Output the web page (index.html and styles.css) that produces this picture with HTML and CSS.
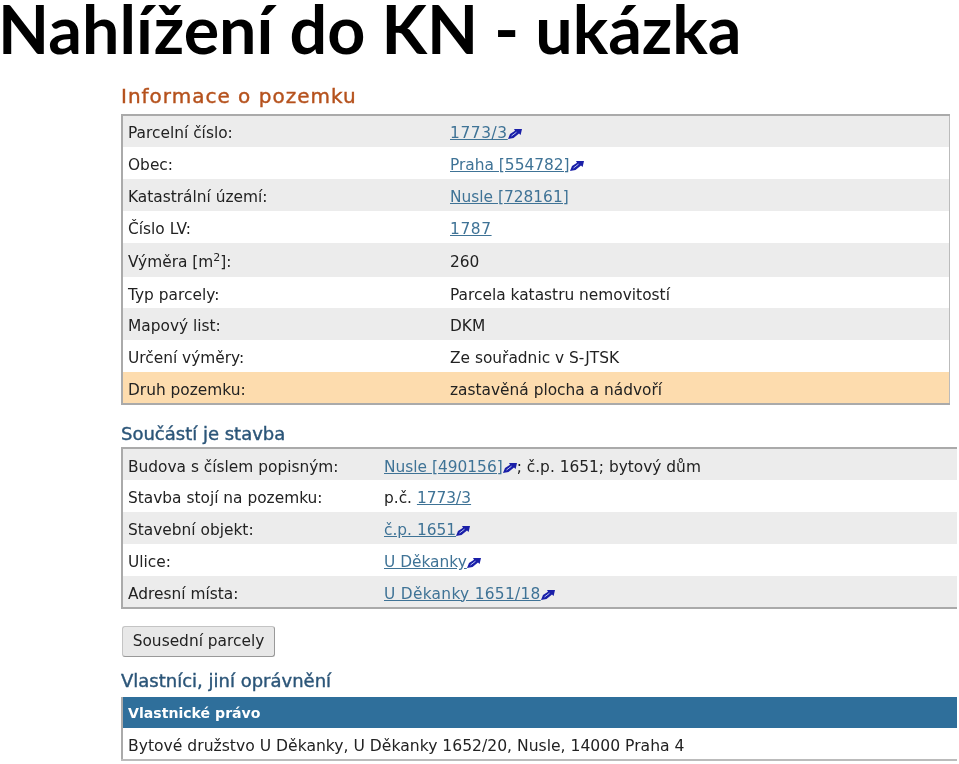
FILE: index.html
```html
<!DOCTYPE html>
<html lang="cs">
<head>
  <meta charset="UTF-8">
  <title>Nahlížení do KN - ukázka</title>
  <link rel="stylesheet" href="styles.css">
</head>
<body>
  <svg class="defs" width="0" height="0">
    <symbol id="pen" viewBox="0 0 14 10">
      <path d="M0 10 L2 5 L7 1.8 L6 0 L14 0 L12.6 6 L11 4.6 L5.5 9 Z" fill="#1a1fa8"/>
      <path d="M3.5 7 L8.5 3.2" stroke="#b9c4f2" stroke-width="1" fill="none"/>
    </symbol>
  </svg>

  <h1 class="slide-title">Nahlížení do KN - ukázka</h1>

  <div class="content">
    <h2 class="sec-title orange">Informace o pozemku</h2>
    <table class="info parcel">
      <tr><td class="lbl">Parcelní číslo:</td><td><a href="#" class="num">1773/3<svg class="pen"><use href="#pen"/></svg></a></td></tr>
      <tr><td class="lbl">Obec:</td><td><a href="#">Praha [554782]<svg class="pen"><use href="#pen"/></svg></a></td></tr>
      <tr><td class="lbl">Katastrální území:</td><td><a href="#">Nusle [728161]</a></td></tr>
      <tr><td class="lbl">Číslo LV:</td><td><a href="#" class="num">1787</a></td></tr>
      <tr class="tall"><td class="lbl">Výměra [m<sup>2</sup>]:</td><td>260</td></tr>
      <tr><td class="lbl">Typ parcely:</td><td>Parcela katastru nemovitostí</td></tr>
      <tr><td class="lbl">Mapový list:</td><td>DKM</td></tr>
      <tr><td class="lbl">Určení výměry:</td><td>Ze souřadnic v S-JTSK</td></tr>
      <tr class="hl"><td class="lbl">Druh pozemku:</td><td>zastavěná plocha a nádvoří</td></tr>
    </table>

    <h2 class="sec-title blue">Součástí je stavba</h2>
    <table class="info building">
      <tr><td class="lbl">Budova s číslem popisným:</td><td><a href="#">Nusle [490156]<svg class="pen"><use href="#pen"/></svg></a>; č.p. 1651; bytový dům</td></tr>
      <tr><td class="lbl">Stavba stojí na pozemku:</td><td>p.č. <a href="#">1773/3</a></td></tr>
      <tr><td class="lbl">Stavební objekt:</td><td><a href="#">č.p. 1651<svg class="pen"><use href="#pen"/></svg></a></td></tr>
      <tr><td class="lbl">Ulice:</td><td><a href="#">U Děkanky<svg class="pen"><use href="#pen"/></svg></a></td></tr>
      <tr><td class="lbl">Adresní místa:</td><td><a href="#" class="num-s">U Děkanky 1651/18<svg class="pen"><use href="#pen"/></svg></a></td></tr>
    </table>

    <button class="btn">Sousední parcely</button>

    <h2 class="sec-title blue owners">Vlastníci, jiní oprávnění</h2>
    <table class="info owner">
      <tr class="head"><th>Vlastnické právo</th></tr>
      <tr class="plain"><td>Bytové družstvo U Děkanky, U Děkanky 1652/20, Nusle, 14000 Praha 4</td></tr>
    </table>
  </div>
</body>
</html>
```

FILE: styles.css
```css
html, body {
  margin: 0;
  padding: 0;
  background: #fff;
  overflow: hidden;
}
body {
  height: 764px;
  font-family: "DejaVu Sans", sans-serif;
  color: #222;
}
.defs {
  display: block;
  height: 0;
}
.slide-title {
  margin: 0 0 0 -2px;
  height: 67px;
  font-family: Lato, sans-serif;
  font-size: 66.4px;
  line-height: 56px;
  font-weight: 700;
  color: #000;
  white-space: nowrap;
}
.content {
  padding-left: 121px;
  filter: blur(0.35px);
}
.sec-title {
  margin: 0;
  line-height: 22px;
  font-weight: 400;
  -webkit-text-stroke: 0.4px currentColor;
}
.orange {
  padding-top: 18px;
  padding-bottom: 7px;
  font-size: 20px;
  letter-spacing: 1px;
  color: #b5511c;
}
.blue {
  padding-top: 18px;
  padding-bottom: 2px;
  font-size: 18px;
  color: #2b5578;
}
.owners {
  padding-top: 13px;
  padding-bottom: 5px;
}
.info {
  border-collapse: collapse;
  table-layout: fixed;
  font-size: 15.4px;
  border-top: 2px solid #aaa;
  border-left: 2px solid #aaa;
}
.parcel {
  width: 829px;
  border-right: 1px solid #bbb;
  border-bottom: 2px solid #aaa;
}
.building {
  width: 836px;
  border-bottom: 2px solid #aaa;
}
.owner {
  width: 836px;
  border-top: 0;
  border-bottom: 2px solid #bbb;
}
.info td, .info th {
  box-sizing: border-box;
  height: 31.9px;
  padding: 4px 0 0 5px;
  white-space: nowrap;
  text-align: left;
}
.building td {
  padding-top: 5px;
}
.parcel .lbl {
  width: 323px;
}
.building .lbl {
  width: 257px;
}
.info tr:nth-child(odd) {
  background: #ececec;
}
.info tr:nth-child(even) {
  background: #fff;
}
.info .tall td {
  height: 34px;
}
.info tr.hl {
  background: #fddcae;
}
.info sup {
  font-size: 11px;
  line-height: 0;
}
.info tr.head {
  background: #2f6f9b;
  color: #fff;
}
.info .head th {
  font-weight: 700;
  font-size: 14.1px;
  padding-top: 1px;
}
.info .plain td {
  font-size: 15.6px;
  padding-top: 5px;
}
.info a {
  color: #3f7396;
}
.info a.num {
  letter-spacing: 0.6px;
}
.info a.num-s {
  letter-spacing: 0.3px;
}
.pen {
  width: 14px;
  height: 10px;
  vertical-align: -1px;
}
.btn {
  display: block;
  box-sizing: border-box;
  width: 153px;
  height: 31px;
  margin: 17px 0 0 1px;
  padding: 0;
  font-family: inherit;
  font-size: 15.4px;
  color: #222;
  background: #e8e8e8;
  border: 1px solid #c4c4c4;
  border-right-color: #999;
  border-bottom-color: #999;
  border-radius: 3px;
}
```
